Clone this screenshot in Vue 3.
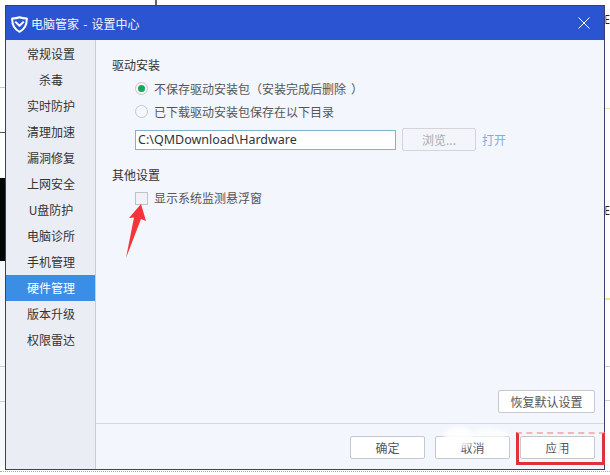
<script setup>
const menu = ['常规设置','杀毒','实时防护','清理加速','漏洞修复','上网安全','U盘防护','电脑诊所','手机管理','硬件管理','版本升级','权限雷达']
const activeItem = '硬件管理'
</script>

<template>
  <div class="page">
    <div class="scrap s-top"></div>
    <div class="scrap s-black"></div>
    <div class="scrap s-pale"></div>
    <div class="scrap s-l1"></div>
    <div class="scrap s-l2"></div>
    <div class="scrap s-l3"></div>
    <div class="scrap s-l4"></div>
    <div class="scrap s-r1"></div>
    <div class="scrap s-r2"></div>
    <div class="scrap s-r3"></div>
    <div class="scrap s-bottom"></div>
    <span class="scrap glyph g1">E</span>
    <span class="scrap glyph g2">E</span>

    <section class="window">
      <header class="titlebar">
        <svg class="logo" width="17" height="17" viewBox="0 0 17 17" fill="none" stroke="#fff" stroke-linejoin="round">
          <path d="M8.5 1.2 C6 2.2 3.5 2.4 1.2 2.4 C1 8 2.2 12.6 8.5 15.8 C14.8 12.6 16 8 15.8 2.4 C13.5 2.4 11 2.2 8.5 1.2Z" stroke-width="2"/>
          <path d="M4.2 5.6 L8.5 9.8 L12.8 5.6" stroke-width="2"/>
        </svg>
        <span class="title">电脑管家 - 设置中心</span>
        <svg class="close" width="12" height="12" viewBox="0 0 12 12" stroke="#fff" stroke-width="1">
          <path d="M0.5 0.5 L11.5 11.5 M11.5 0.5 L0.5 11.5"/>
        </svg>
      </header>

      <div class="body">
        <nav class="sidebar">
          <div v-for="m in menu" :key="m" class="item" :class="{ active: m === activeItem }">{{ m }}</div>
        </nav>

        <main class="main">
          <div class="content">
            <h3 class="heading">驱动安装</h3>
            <div class="option first">
              <span class="radio on"></span>
              <span>不保存驱动安装包（安装完成后删除<span class="paren-r">）</span></span>
            </div>
            <div class="option second">
              <span class="radio"></span>
              <span>已下载驱动安装包保存在以下目录</span>
            </div>
            <div class="pathrow">
              <div class="input">C:\QMDownload\Hardware</div>
              <button class="btn browse">浏览...</button>
              <span class="link">打开</span>
            </div>
            <h3 class="heading other">其他设置</h3>
            <div class="option check">
              <span class="checkbox"></span>
              <span class="checklabel">显示系统监测悬浮窗</span>
            </div>
            <div class="restore-row">
              <button class="btn restore">恢复默认设置</button>
            </div>
          </div>
          <footer class="footer">
            <button class="btn act">确定</button>
            <button class="btn act">取消</button>
            <button class="btn act">应用</button>
          </footer>
        </main>
      </div>
    </section>

    <svg class="arrow" width="30" height="64" viewBox="0 0 30 64">
      <polygon points="16,1 4,15 9,14.500 1,55 16,16 21,18" fill="#f5333a"/>
    </svg>
    <div class="redframe"></div>
    <div class="blob b1"></div>
    <div class="blob b2"></div>
    <div class="blob b3"></div>
  </div>
</template>

<style scoped>
.page {
  position: relative;
  width: 610px;
  height: 475px;
  overflow: hidden;
  background: #fff;
  font-family: "Noto Sans CJK SC", "Noto Sans", sans-serif;
  font-size: 12px;
  color: #555;
  padding: 5px 0 0 5px;
  box-sizing: border-box;
  text-spacing-trim: space-all;
}

.scrap { position: absolute; }
.s-top { left: 155px; top: 0; width: 2px; height: 5px; background: #666; }
.s-black { left: 0; top: 178px; width: 5px; height: 83px; background: #050505; }
.s-pale { left: 0; top: 261px; width: 5px; height: 205px; background: #f7f7fc; }
.s-l1 { left: 0; top: 87px; width: 5px; height: 1px; background: #c9c9c9; }
.s-l2 { left: 0; top: 132px; width: 5px; height: 1px; background: #555; }
.s-l3 { left: 0; top: 366px; width: 5px; height: 1px; background: #cfcfcf; }
.s-l4 { left: 0; top: 401px; width: 5px; height: 1px; background: #cfcfcf; }
.s-r1 { left: 605px; top: 108px; width: 5px; height: 1px; background: #e8e4b0; }
.s-r2 { left: 605px; top: 298px; width: 5px; height: 2px; background: #f0e680; }
.s-r3 { left: 605px; top: 366px; width: 5px; height: 35px; border-top: 1px solid #ccc; border-bottom: 1px solid #ccc; box-sizing: border-box; }
.s-bottom { left: 0; top: 471px; width: 610px; height: 0; border-top: 1px dotted #aaa; }
.glyph {
  left: 605px;
  display: inline-block;
  font-family: "Liberation Sans", sans-serif;
  font-size: 12px;
  line-height: 14px;
  color: #222;
  transform: scaleX(.6);
  transform-origin: left center;
}
.g1 { top: 13px; }
.g2 { top: 204px; }

.window {
  position: relative;
  width: 600px;
  height: 465px;
  box-sizing: border-box;
  border: 1px solid #3a3f6b;
  display: flex;
  flex-direction: column;
  background: #f3f6fd;
}

.titlebar {
  height: 34px;
  flex: none;
  background: #2b54d2;
  display: flex;
  align-items: center;
  padding: 0 14px 0 5px;
  color: #fff;
}
.logo { margin-top: 2px; flex: none; }
.title { margin-left: 3px; color: #f2f5ff; word-spacing: 1.5px; }
.close { margin-left: auto; }

.body { flex: 1; display: flex; min-height: 0; }

.sidebar {
  width: 89px;
  flex: none;
  border-right: 1px solid #c9cdd9;
  background: #ebedf5;
  padding-top: 1px;
}
.item {
  height: 26px;
  line-height: 26px;
  text-align: center;
  text-indent: 1px;
  color: #333;
}
.item.active { background: #3b8ee6; color: #fff; }

.main { flex: 1; display: flex; flex-direction: column; min-width: 0; }
.content { flex: 1; padding: 16px 8px 0 16px; position: relative; }

.heading { margin: 0; font-size: 12px; font-weight: 400; line-height: 18px; color: #333; }
.heading.other { margin-top: 15px; }

.option { display: flex; align-items: center; height: 18px; padding-left: 23px; gap: 6px; color: #555; }
.option.first { margin-top: 5px; }
.option.second { margin-top: 5px; }
.option.check { margin-top: 5px; }
.checklabel { position: relative; top: -1px; }
.paren-r { display: inline-block; width: 12px; text-indent: 5px; }

.radio {
  width: 13px;
  height: 13px;
  box-sizing: border-box;
  border: 1px solid #c4c8cf;
  border-radius: 50%;
  background: #f6f7fa;
  position: relative;
  flex: none;
}
.radio.on::after {
  content: "";
  position: absolute;
  left: 2px;
  top: 2px;
  width: 7px;
  height: 7px;
  border-radius: 50%;
  background: #14a857;
}

.checkbox {
  width: 13px;
  height: 13px;
  box-sizing: border-box;
  border: 1px solid #bfc3c9;
  background: #f1f2f5;
  flex: none;
}

.pathrow { display: flex; align-items: center; margin: 8px 0 0 23px; height: 23px; }
.input {
  width: 261px;
  height: 20px;
  box-sizing: border-box;
  border: 1px solid #7fb5c8;
  background: #fff;
  padding-left: 2px;
  line-height: 18px;
  font-family: "Noto Sans", sans-serif;
  font-size: 12.5px;
  color: #333;
  white-space: nowrap;
}

.btn {
  box-sizing: border-box;
  border: 1px solid #c6c8cc;
  border-radius: 2px;
  background: #fff;
  font: inherit;
  color: #555;
  padding: 0;
  height: 23px;
}
.browse { width: 74px; margin-left: 6px; background: #f3f5fa; color: #a9abb0; border-color: #d3d5da; }
.link { margin-left: 6px; color: #7fb0d6; }

.restore-row { position: absolute; right: 9px; bottom: 10px; }
.restore { width: 97px; }

.footer {
  height: 46px;
  flex: none;
  box-sizing: border-box;
  border-top: 1px solid #d5d9e4;
  display: flex;
  justify-content: flex-end;
  align-items: flex-start;
  gap: 10px;
  padding: 12px 9px 0 0;
}
.act { width: 75px; }

.arrow { position: absolute; left: 125px; top: 203px; }

.redframe {
  position: absolute;
  left: 516px;
  top: 432px;
  width: 89px;
  height: 33px;
  box-sizing: border-box;
  border: 3px solid #e0303a;
  border-top: 2px dashed #f3b5b8;
}

.blob { position: absolute; background: #fff; border-radius: 50%; filter: blur(2px); opacity: .9; }
.b1 { left: 444px; top: 427px; width: 30px; height: 21px; }
.b2 { left: 472px; top: 428px; width: 36px; height: 16px; opacity: .7; }
.b3 { left: 556px; top: 442px; width: 5px; height: 13px; border-radius: 2px; filter: blur(1px); }
</style>
